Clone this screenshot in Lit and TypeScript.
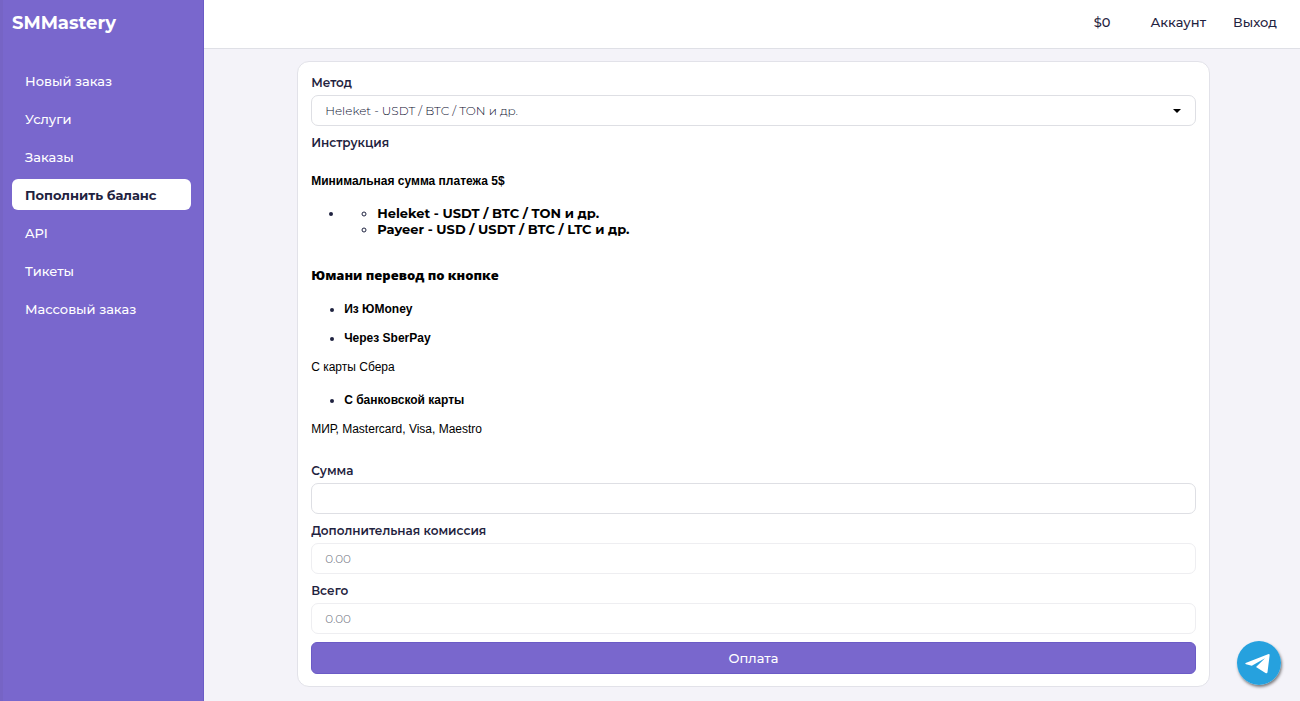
import { LitElement, html, css } from "lit";
import { customElement, state } from "lit/decorators.js";

@customElement("app-root")
export class AppRoot extends LitElement {
  static styles = css`
    :host {
      display: grid;
      grid-template-columns: 204px minmax(0, 1fr);
      min-height: 100vh;
      background: #f4f3f9;
      color: #1f2340;
      font: 500 13px/16px Montserrat, Inter, "Noto Sans", sans-serif;
    }
    *, *::before, *::after { box-sizing: border-box; }
    a { color: inherit; text-decoration: none; }
    .sidebar {
      background: #7967cd;
      color: #fff;
      padding: 12px 12px 0;
      border-right: 1px solid #6b5bc6;
      box-shadow: inset 3px 0 0 #7664c5;
    }
    .brand { display: block; font-size: 18px; line-height: 22px; font-weight: 700; }
    .nav { display: grid; gap: 7px; margin: 31px 0 0; padding: 0; list-style: none; }
    .nav-link {
      display: flex;
      align-items: center;
      height: 31px;
      padding: 0 13px;
      border-radius: 6px;
    }
    .nav-link.active { background: #fff; color: #1f2340; font-weight: 700; }
    .page { min-width: 0; }
    .topbar {
      display: flex;
      justify-content: flex-end;
      align-items: center;
      height: 49px;
      padding: 0 23px 4px 0;
      background: #fff;
      border-bottom: 1px solid #dfe0e6;
    }
    .balance { margin-right: 40px; }
    .account { margin-right: 27px; }
    .content { padding-left: 3px; }
    .card {
      width: 83.5%;
      margin: 12px auto;
      padding: 12px 13px;
      background: #fff;
      border: 1px solid #e2e2e9;
      border-radius: 12px;
    }
    .field { display: grid; gap: 4px; margin-bottom: 8px; }
    .label { font-size: 12px; line-height: 17px; font-weight: 600; }
    .control {
      width: 100%;
      height: 31px;
      margin: 0;
      padding: 0 13px;
      border: 1px solid #dedfe4;
      border-radius: 7px;
      background: #fff;
      color: #0d1030;
      font: 300 12px/16px Montserrat, Inter, "Noto Sans", sans-serif;
      appearance: none;
      outline: none;
    }
    .control:focus-visible { border-color: #7967cd; }
    .control:disabled { border-color: #eeeef1; color: #6d6f7c; opacity: 1; }
    .select { display: grid; align-items: center; }
    .select > * { grid-area: 1 / 1; }
    .arrow { justify-self: end; margin-right: 15px; pointer-events: none; }
    .instruction { margin: 22px 0 25px; color: #000; font: 400 12px/16px "Liberation Sans", Arial, sans-serif; }
    .instruction p, .instruction h3, .instruction ul { margin: 0; }
    .instruction h3 { font-size: 12px; line-height: 16px; }
    .instruction ul { padding-left: 33px; font-weight: 700; }
    .instruction li::marker { color: #1f2340; }
    .instruction .methods { margin: 16px 0 30px; font: 700 13px/16px Montserrat, Inter, "Noto Sans", sans-serif; }
    .instruction .transfer { font-family: "Arial Black", "Open Sans", sans-serif; font-size: 13px; font-weight: 800; }
    .instruction .options { display: grid; gap: 13px; margin: 18px 0 13px; }
    .instruction .options.cards { margin-top: 17px; }
    .pay {
      display: block;
      width: 100%;
      height: 32px;
      border: 1px solid #6b5bc6;
      border-radius: 6px;
      background: #7967cd;
      color: #fff;
      font: inherit;
      cursor: pointer;
    }
    .telegram {
      position: fixed;
      right: 19px;
      bottom: 16px;
      width: 44px;
      height: 44px;
      border-radius: 50%;
      box-shadow: 1px 2px 3px rgba(0, 0, 0, 0.5);
    }
    .telegram svg { display: block; }
  `;

  @state() private amount = "";

  private nav = ["Новый заказ", "Услуги", "Заказы", "Пополнить баланс", "API", "Тикеты", "Массовый заказ"];
  private current = "Пополнить баланс";

  render() {
    return html`
      <aside class="sidebar">
        <a class="brand" href="#">SMMastery</a>
        <nav>
          <ul class="nav">
            ${this.nav.map(
              (name) => html`<li><a class="nav-link ${name === this.current ? "active" : ""}" href="#">${name}</a></li>`
            )}
          </ul>
        </nav>
      </aside>
      <div class="page">
        <header class="topbar">
          <span class="balance">$0</span>
          <a class="account" href="#">Аккаунт</a>
          <a href="#">Выход</a>
        </header>
        <main class="content">
          <form class="card" @submit=${(e: Event) => e.preventDefault()}>
            <div class="field">
              <label class="label" for="method">Метод</label>
              <div class="select">
                <select class="control" id="method">
                  <option>Heleket - USDT / BTC / TON и др.</option>
                </select>
                <svg class="arrow" width="8" height="4" viewBox="0 0 8 4" aria-hidden="true"><path d="M0 0h8L4 4z" fill="#000" /></svg>
              </div>
            </div>
            <div class="label">Инструкция</div>
            <div class="instruction">
              <h3>Минимальная сумма платежа 5$</h3>
              <ul class="methods">
                <li>
                  <ul>
                    <li>Heleket - USDT / BTC / TON и др.</li>
                    <li>Payeer - USD / USDT / BTC / LTC и др.</li>
                  </ul>
                </li>
              </ul>
              <h3 class="transfer">Юмани перевод по кнопке</h3>
              <ul class="options">
                <li>Из ЮMoney</li>
                <li>Через SberPay</li>
              </ul>
              <p>С карты Сбера</p>
              <ul class="options cards">
                <li>С банковской карты</li>
              </ul>
              <p>МИР, Mastercard, Visa, Maestro</p>
            </div>
            <div class="field">
              <label class="label" for="amount">Сумма</label>
              <input class="control" id="amount" .value=${this.amount}
                @input=${(e: Event) => (this.amount = (e.target as HTMLInputElement).value)} />
            </div>
            <div class="field">
              <label class="label" for="fee">Дополнительная комиссия</label>
              <input class="control" id="fee" value="0.00" disabled />
            </div>
            <div class="field">
              <label class="label" for="total">Всего</label>
              <input class="control" id="total" value="0.00" disabled />
            </div>
            <button class="pay" type="submit">Оплата</button>
          </form>
        </main>
      </div>
      <a class="telegram" href="#" aria-label="Telegram">
        <svg width="44" height="44" viewBox="0 0 44 44" aria-hidden="true">
          <circle cx="22" cy="22" r="22" fill="#26a1de" />
          <path d="M8.6 21.9 31 13.2q1.900-.6 1.600 1.300L30.500 31.200q-.4 1.800-2 .8L19 26l9-8.700-13.200 7.400-5.800-1.500q-1.300-.6-.4-1.300z" fill="#fff" />
        </svg>
      </a>
    `;
  }
}
